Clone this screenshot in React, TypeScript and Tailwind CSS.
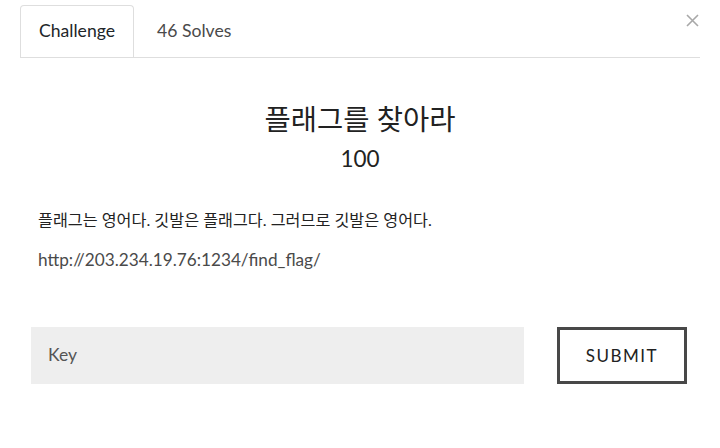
import React from 'react';

const App = () => {
  const tabs = [
    { label: 'Challenge', active: true },
    { label: '46 Solves', active: false },
  ];

  return (
    <div
      className="relative w-[720px] h-[448px] bg-white text-[#212529]"
      style={{ fontFamily: 'Lato, "Noto Sans CJK KR", sans-serif' }}
    >
      <button className="absolute left-[686px] top-[14px] w-[13px] h-[13px]">
        <svg width="13" height="13" viewBox="0 0 13 13" fill="none">
          <path d="M1 1L12 12M12 1L1 12" stroke="#a8a8a8" strokeWidth="1.6" />
        </svg>
      </button>

      <div className="mx-[20px] pt-[5px] flex border-b border-[#dedede]">
        {tabs.map((tab, index) => (
          <div
            key={index}
            className={
              tab.active
                ? 'h-[52px] px-[18px] -mb-px flex items-center bg-white border border-b-0 border-[#dedede] rounded-t-[4px] text-[17.6px] text-[#212529]'
                : 'h-[52px] px-[23px] flex items-center text-[17.6px] text-[#4a4a4a]'
            }
          >
            {tab.label}
          </div>
        ))}
      </div>

      <div className="pt-[41px] text-center">
        <h2 className="text-[28.5px] leading-[40px] text-[#222]">플래그를 찾아라</h2>
        <div className="mt-[6px] text-[22.5px] leading-[28px] text-[#222]">100</div>
      </div>

      <div className="px-[38px] pt-[35px]">
        <p className="text-[16.2px] leading-[24px] text-[#222]">
          플래그는 영어다. 깃발은 플래그다. 그러므로 깃발은 영어다.
        </p>
        <p className="mt-[16px] text-[17.2px] leading-[24px] text-[#4a4a4a]">
          http://203.234.19.76:1234/find_flag/
        </p>
      </div>

      <div className="mt-[55px] pl-[31px] pr-[33px] flex items-center gap-[33px]">
        <div className="w-[493px] h-[57px] bg-[#eeeeee] flex items-center px-[17px] text-[17.5px] text-[#555]">
          Key
        </div>
        <button className="w-[130px] h-[57px] border-[3px] border-[#484848] bg-white text-[17px] tracking-[1.5px] text-[#222] flex items-center justify-center">
          SUBMIT
        </button>
      </div>
    </div>
  );
};

export default App;
